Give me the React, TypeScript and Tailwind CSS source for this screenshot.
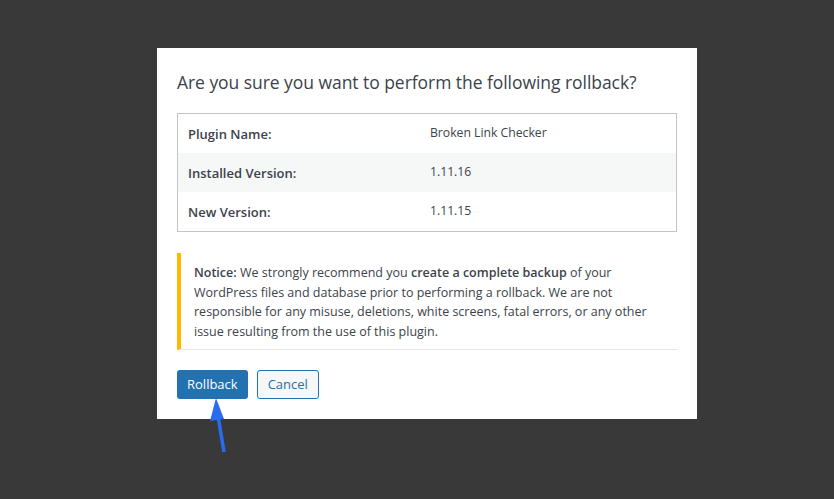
import React from "react";

const rows = [
  { label: "Plugin Name:", value: "Broken Link Checker" },
  { label: "Installed Version:", value: "1.11.16" },
  { label: "New Version:", value: "1.11.15" },
];

export default function App() {
  return (
    <div
      className="relative h-[499px] w-[834px] bg-[#393939] pl-[157px] pt-[48px]"
      style={{ fontFamily: '"Open Sans", "Noto Sans", sans-serif' }}
    >
      <div className="w-[540px] bg-white px-5 pt-[21px] pb-5 text-[#3c434a]">
        <h2 className="text-[17.5px] leading-[26px] tracking-[-0.05px]">
          Are you sure you want to perform the following rollback?
        </h2>

        <div className="mt-[18px] border border-[#c3c4c7]">
          {rows.map((r, i) => (
            <div
              key={r.label}
              className={`flex h-[39px] items-center ${i === 1 ? "bg-[#f6f7f7]" : "bg-white"}`}
            >
              <div className="w-[252px] pl-[10px] pt-[3px] text-[13px] font-semibold">{r.label}</div>
              <div className="pb-[1px] text-[12.2px]">{r.value}</div>
            </div>
          ))}
        </div>

        <p className="mt-[21px] border-l-4 border-b border-l-[#ffb900] border-b-[#e5e5e5] bg-white pt-[10px] pb-[8px] pl-[13px] pr-3 text-[12.5px] leading-[19.5px]">
          <b className="font-semibold">Notice:</b> We strongly recommend you{" "}
          <b className="font-semibold">create a complete backup</b> of your WordPress files and database prior
          to performing a rollback. We are not responsible for any misuse, deletions, white screens, fatal errors, or
          any other issue resulting from the use of this plugin.
        </p>

        <div className="mt-5 flex gap-[9px]">
          <button className="h-[29px] rounded-[3px] bg-[#2271b1] px-[10px] text-[13px] text-white">Rollback</button>
          <button className="h-[29px] rounded-[3px] border border-[#2271b1] bg-[#f6f7f7] px-[10px] text-[13px] text-[#2271b1]">
            Cancel
          </button>
        </div>
      </div>

      <svg className="absolute left-[206px] top-[396px]" width="26" height="60" viewBox="0 0 26 60">
        <path d="M18 56 L12 20" stroke="#2a6cf0" strokeWidth="3.5" strokeLinecap="butt" fill="none" />
        <path d="M10 2 L4 25 L18 23 Z" fill="#2a6cf0" />
      </svg>
    </div>
  );
}
